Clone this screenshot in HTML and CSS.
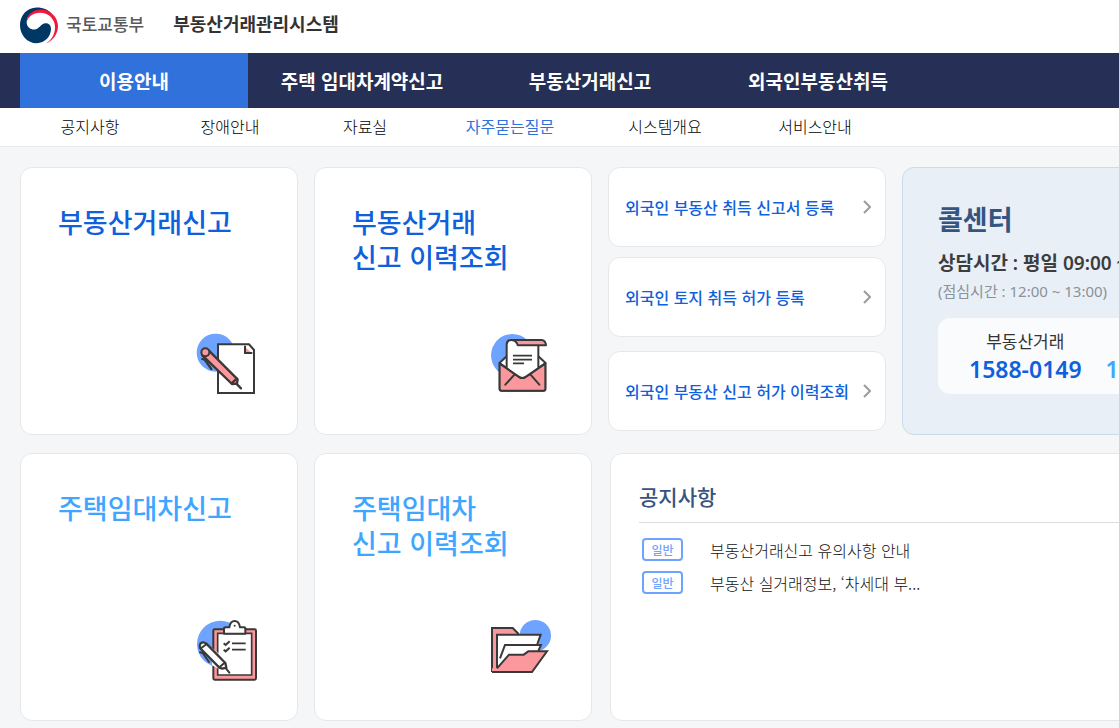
FILE: index.html
```html
<!DOCTYPE html>
<html lang="ko">
<head>
<meta charset="utf-8">
<meta name="viewport" content="width=device-width, initial-scale=1">
<title>부동산거래관리시스템</title>
<link rel="stylesheet" href="styles.css">
</head>
<body>
<header class="top">
  <a class="brand" href="#">
    <svg class="emblem" viewBox="60 20 114 110" aria-hidden="true">
      <path fill="#003764" d="M110 21C80 21 60 46 60 74C60 104 82 128 110 128C135 128 153 108 153 85C153 73 145 68 137 68C122 68 118 87 103 87C90 87 80 78 80 65C80 45 98 30 122 30C138 30 150 36 157 42C147 28 130 21 110 21Z"/>
      <path fill="#f5163b" d="M80 65C80 45 98 27 122 27C152 27 173 50 174 76C174 100 160 120 138 129C158 115 165 98 165 80C165 55 145 37 120 37C98 37 84 50 80 65Z"/>
    </svg>
    <span class="ministry">국토교통부</span>
  </a>
  <a class="system" href="#">부동산거래관리시스템</a>
</header>
<nav class="main-nav" aria-label="주 메뉴">
  <a class="tab active" href="#">이용안내</a>
  <a class="tab" href="#">주택 임대차계약신고</a>
  <a class="tab" href="#">부동산거래신고</a>
  <a class="tab" href="#">외국인부동산취득</a>
</nav>
<nav class="sub-nav" aria-label="하위 메뉴">
  <a href="#">공지사항</a>
  <a href="#">장애안내</a>
  <a href="#">자료실</a>
  <a class="current" href="#">자주묻는질문</a>
  <a href="#">시스템개요</a>
  <a href="#">서비스안내</a>
</nav>
<main class="board">
  <a class="card service" href="#">
    <h2>부동산거래신고</h2>
    <svg class="icon" viewBox="51 42 180 180" aria-hidden="true">
      <circle cx="107" cy="98" r="57" fill="#6ea4ff"/>
      <path d="M114 73H207L222 90V219H114Z" fill="#fff" stroke="#3a3838" stroke-width="6"/>
      <path d="M195 80V99H214Z" fill="#fb989d"/>
      <path d="M195 77V99H217" fill="none" stroke="#3a3838" stroke-width="6"/>
      <path d="M67 106L86 91L173 178L171 191L156 192Z" fill="#fb989d" stroke="#3a3838" stroke-width="7" stroke-linejoin="round"/>
      <circle cx="76" cy="97" r="12" fill="#fb989d" stroke="#3a3838" stroke-width="6"/>
      <path d="M67 117L74 119L94 147M155 190L170 176M169 191L183 205" fill="none" stroke="#3a3838" stroke-width="7" stroke-linecap="round"/>
    </svg>
  </a>
  <a class="card service" href="#">
    <h2>부동산거래<br>신고 이력조회</h2>
    <svg class="icon" viewBox="48 42 180 180" aria-hidden="true">
      <circle cx="112" cy="106" r="64" fill="#6ea4ff"/>
      <path d="M74 128L95 109H190L211 128V207Q211 212 205 212H80Q74 212 74 207Z" fill="#fff" stroke="#3a3838" stroke-width="6" stroke-linejoin="round"/>
      <path d="M74 130L131 170Q142 178 153 170L211 130V206Q211 212 205 212H80Q74 212 74 206Z" fill="#fb989d" stroke="#3a3838" stroke-width="6" stroke-linejoin="round"/>
      <path d="M95 142V74Q95 60 109 60H190V142L153 170Q142 178 131 170Z" fill="#fff"/>
      <path d="M95 144V74Q95 60 109 60H150M190 76V144M74 130L131 170Q142 178 153 170L211 130M119 163L91 194M166 163L193 194" fill="none" stroke="#3a3838" stroke-width="6" stroke-linecap="round"/>
      <path d="M110 60H199Q212 61 213 76H130Q127 76 126 70Q121 60 110 60Z" fill="#fb989d" stroke="#3a3838" stroke-width="6" stroke-linejoin="round"/>
      <path d="M114 107H171M114 119H171M114 130H147" stroke="#3a3838" stroke-width="5"/>
    </svg>
  </a>
  <div class="links">
    <a class="card link" href="#">외국인 부동산 취득 신고서 등록
      <svg class="chevron" viewBox="0 0 8 14" aria-hidden="true"><path d="M1 1L7 7L1 13" fill="none" stroke="#9c9c9c" stroke-width="2"/></svg></a>
    <a class="card link" href="#">외국인 토지 취득 허가 등록
      <svg class="chevron" viewBox="0 0 8 14" aria-hidden="true"><path d="M1 1L7 7L1 13" fill="none" stroke="#9c9c9c" stroke-width="2"/></svg></a>
    <a class="card link last" href="#">외국인 부동산 신고 허가 이력조회
      <svg class="chevron" viewBox="0 0 8 14" aria-hidden="true"><path d="M1 1L7 7L1 13" fill="none" stroke="#9c9c9c" stroke-width="2"/></svg></a>
  </div>
  <section class="card call">
    <h2>콜센터</h2>
    <p class="hours">상담시간 : 평일 09:00 ~</p>
    <p class="lunch">(점심시간 : 12:00 ~ 13:00)</p>
    <div class="phones">
      <div class="phone"><span>부동산거래</span><strong>1588-0149</strong></div>
      <div class="phone lease"><strong>1</strong></div>
    </div>
  </section>
  <a class="card service lease" href="#">
    <h2>주택임대차신고</h2>
    <svg class="icon" viewBox="51 45 180 180" aria-hidden="true">
      <circle cx="121" cy="117" r="70" fill="#6ea4ff"/>
      <rect x="100" y="73" width="128" height="151" rx="4" fill="#fb989d" stroke="#3a3838" stroke-width="6"/>
      <path d="M113 85H215V210H113Z" fill="#fff" stroke="#3a3838" stroke-width="5"/>
      <path d="M132 86V71Q132 67 137 67H148Q151 48 164 48Q177 48 180 67H191Q196 67 196 71V86Z" fill="#fff" stroke="#3a3838" stroke-width="6" stroke-linejoin="round"/>
      <circle cx="164" cy="62" r="3" fill="#3a3838"/>
      <path d="M131 115L137 120L149 109M131 134L137 139L149 128" fill="none" stroke="#3a3838" stroke-width="6"/>
      <path d="M156 115H197M156 134H197" stroke="#3a3838" stroke-width="5"/>
      <path d="M96 128L117 146V192L96 181Z" fill="#fff"/>
      <path d="M60 129Q57 121 62 115Q70 109 79 116L136 174L139 188L127 191L118 188Z" fill="#fff" stroke="#3a3838" stroke-width="7" stroke-linejoin="round"/>
      <path d="M64 129L80 117M60 142L68 144L87 171M118 187L134 173M136 188L148 203" fill="none" stroke="#3a3838" stroke-width="6" stroke-linecap="round"/>
    </svg>
  </a>
  <a class="card service lease" href="#">
    <h2>주택임대차<br>신고 이력조회</h2>
    <svg class="icon" viewBox="48 45 180 180" aria-hidden="true">
      <circle cx="181" cy="92" r="47" fill="#6ea4ff"/>
      <path d="M51 201V69H113L131 87H65V190Z" fill="#fb989d"/>
      <path d="M66 89H197L189 119L200 120L192 139L160 137L146 149H102L69 190Z" fill="#fff"/>
      <path d="M51 201V69H113L131 87M66 190V89H197L187 117M75 160L90 120H198L190 138" fill="none" stroke="#3a3838" stroke-width="6"/>
      <path d="M66 190L102 149H146L160 139H216L171 201H51V190Z" fill="#fb989d"/>
      <path d="M66 190L102 149H146L160 139H216L171 201H51" fill="none" stroke="#3a3838" stroke-width="6"/>
    </svg>
  </a>
  <section class="card notice">
    <h2>공지사항</h2>
    <ul>
      <li><span class="badge">일반</span><a href="#">부동산거래신고 유의사항 안내</a></li>
      <li><span class="badge">일반</span><a href="#">부동산 실거래정보, ‘차세대 부...</a></li>
    </ul>
  </section>
</main>
</body>
</html>
```
FILE: styles.css
```css
* { box-sizing: border-box; }
body {
  margin: 0;
  background: #f5f6f8;
  color: #111;
  font-family: "Noto Sans CJK KR", sans-serif;
  font-size: 16px;
  overflow-x: hidden;
}
a { color: inherit; text-decoration: none; }
h2, p, ul { margin: 0; padding: 0; }
.top {
  display: flex;
  align-items: center;
  gap: 29px;
  padding: 7px 20px 9px;
  background: #fff;
  line-height: 33px;
}
.brand { display: flex; align-items: flex-start; gap: 8px; }
.emblem { width: 38px; height: 37px; }
.ministry { font-size: 17px; font-weight: 500; color: #58595b; }
.system { padding-bottom: 4px; font-size: 18px; font-weight: 700; color: #333; }
.main-nav {
  display: flex;
  padding: 0 20px;
  background: #262f55;
}
.tab {
  width: 228px;
  color: #fff;
  font-size: 19px;
  font-weight: 700;
  line-height: 55px;
  text-align: center;
}
.tab.active { background: #3071dc; }
.sub-nav {
  display: grid;
  grid-template-columns: 140px 140px 130px 160px 150px 150px;
  padding: 0 20px 2px;
  background: #fff;
  border-bottom: 1px solid #e9eaec;
  color: #000;
  font-weight: 300;
  line-height: 36px;
  text-align: center;
}
.sub-nav .current { color: #3071dc; font-weight: 400; }
.board {
  display: grid;
  grid-template-columns: 278px 278px 278px minmax(300px, 1fr);
  grid-auto-rows: 268px;
  gap: 18px 16px;
  padding: 20px 20px 7px;
}
.card {
  background: #fff;
  border: 1px solid #e6e7e9;
  border-radius: 12px;
}
.service {
  display: flex;
  flex-direction: column;
  justify-content: space-between;
  padding: 36px 40px 40px 37px;
  color: #0f60dc;
}
.service.lease { color: #3ea6ff; }
.service h2 { font-size: 27px; font-weight: 500; line-height: 35px; }
.icon { width: 60px; height: 60px; align-self: flex-end; overflow: visible; }
.links { display: flex; flex-direction: column; gap: 10px; }
.link {
  display: flex;
  align-items: center;
  justify-content: space-between;
  height: 80px;
  padding: 0 14px 0 16px;
  color: #0f60dc;
  font-weight: 500;
  white-space: nowrap;
}
.link.last { margin-top: 4px; }
.chevron { width: 8px; height: 14px; }
.call {
  padding: 31px 35px;
  background: #e8eff7;
  border-color: #cbdaec;
  white-space: nowrap;
}
.call h2 { color: #35557f; font-size: 27px; font-weight: 700; line-height: 40px; }
.hours { margin-top: 9px; color: #3d3d3d; font-family: "Noto Sans", "Noto Sans CJK KR", sans-serif; font-size: 19px; font-weight: 600; line-height: 30px; }
.lunch { color: #8b9299; font-family: "Noto Sans", "Noto Sans CJK KR", sans-serif; font-size: 15px; font-weight: 400; line-height: 26px; }
.phones {
  display: flex;
  align-items: flex-end;
  gap: 24px;
  min-width: 300px;
  margin-top: 14px;
  padding: 9px 31px 11px;
  background: #f9fbfd;
  border-radius: 12px;
}
.phone { display: flex; flex-direction: column; align-items: center; color: #333; font-size: 17px; line-height: 28px; }
.phone strong { color: #0f60dc; font-family: "Noto Sans", sans-serif; font-size: 23px; font-weight: 600; }
.phone.lease strong { color: #3ea6ff; }
.notice { grid-column: span 2; margin-left: 2px; padding: 25px 28px; }
.notice h2 {
  padding-bottom: 9px;
  border-bottom: 1px solid #dcdcdc;
  color: #35557f;
  font-size: 21px;
  font-weight: 500;
  line-height: 34px;
}
.notice ul { padding: 10px 3px; list-style: none; }
.notice li { display: flex; align-items: center; gap: 27px; height: 33px; font-weight: 300; }
.badge {
  width: 41px;
  border: 2px solid #6ea4ff;
  border-radius: 4px;
  color: #6ea4ff;
  font-size: 12px;
  font-weight: 500;
  line-height: 19px;
  text-align: center;
}
```
